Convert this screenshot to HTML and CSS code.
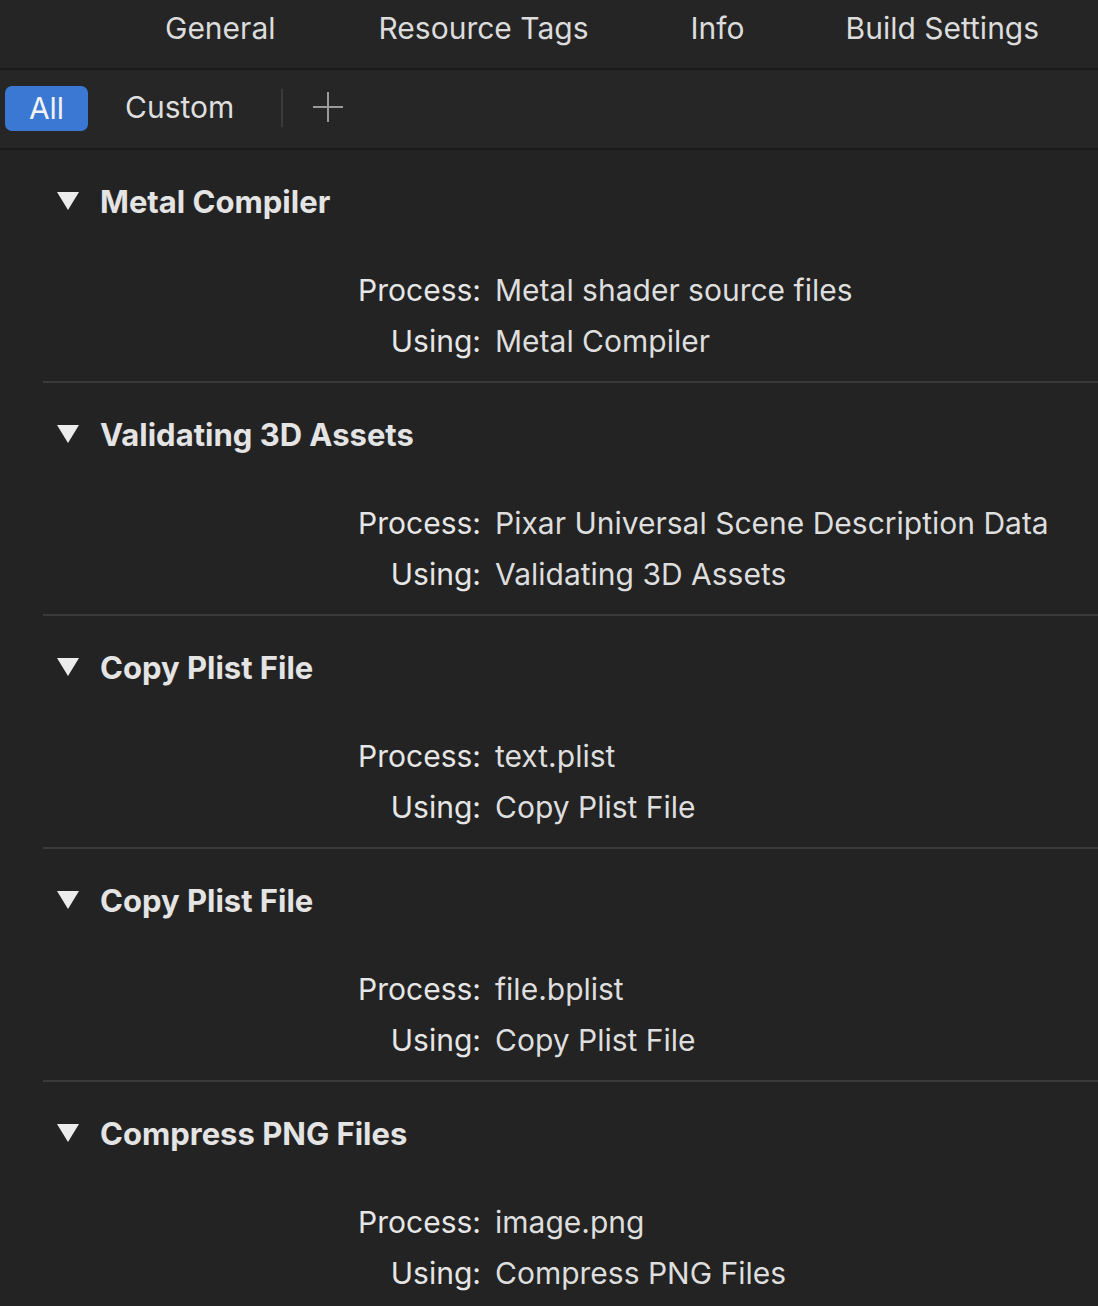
FILE: index.html
```html
<!DOCTYPE html>
<html>
<head>
<meta charset="utf-8">
<link rel="stylesheet" href="styles.css">
</head>
<body>
<div class="tabs">
  <span class="tab t-general">General</span>
  <span class="tab t-tags">Resource Tags</span>
  <span class="tab t-info">Info</span>
  <span class="tab t-build">Build Settings</span>
</div>
<div class="filter">
  <span class="pill">All</span>
  <span class="custom">Custom</span>
  <span class="divider"></span>
  <svg class="plus" width="32" height="32" viewBox="0 0 32 32"><path d="M16 1V31M1 16H31" stroke="#9a9a9a" stroke-width="2" fill="none"/></svg>
</div>
<div class="list">
  <div class="section">
    <div class="head"><span class="tri"></span><span class="title">Metal Compiler</span></div>
    <div class="row"><span class="label">Process:</span><span class="value">Metal shader source files</span></div>
    <div class="row"><span class="label">Using:</span><span class="value">Metal Compiler</span></div>
  </div>
  <div class="section">
    <div class="head"><span class="tri"></span><span class="title">Validating 3D Assets</span></div>
    <div class="row"><span class="label">Process:</span><span class="value">Pixar Universal Scene Description Data</span></div>
    <div class="row"><span class="label">Using:</span><span class="value">Validating 3D Assets</span></div>
  </div>
  <div class="section">
    <div class="head"><span class="tri"></span><span class="title">Copy Plist File</span></div>
    <div class="row"><span class="label">Process:</span><span class="value">text.plist</span></div>
    <div class="row"><span class="label">Using:</span><span class="value">Copy Plist File</span></div>
  </div>
  <div class="section">
    <div class="head"><span class="tri"></span><span class="title">Copy Plist File</span></div>
    <div class="row"><span class="label">Process:</span><span class="value">file.bplist</span></div>
    <div class="row"><span class="label">Using:</span><span class="value">Copy Plist File</span></div>
  </div>
  <div class="section last">
    <div class="head"><span class="tri"></span><span class="title">Compress PNG Files</span></div>
    <div class="row"><span class="label">Process:</span><span class="value">image.png</span></div>
    <div class="row"><span class="label">Using:</span><span class="value">Compress PNG Files</span></div>
  </div>
</div>
</body>
</html>
```
FILE: styles.css
```css
html, body {
  margin: 0;
  padding: 0;
  background: #232323;
  font-family: "Inter", "Liberation Sans", sans-serif;
  color: #dedede;
  overflow: hidden;
}
.tabs {
  height: 68px;
  background: #252525;
  border-bottom: 2px solid #1b1b1b;
  display: flex;
  align-items: center;
  font-size: 30px;
  color: #dcdcdc;
  padding-left: 165px;
}
.tab { line-height: 40px; margin-top: -12px; }
.t-tags { margin-left: 103px; }
.t-info { margin-left: 102px; }
.t-build { margin-left: 101px; }
.filter {
  height: 78px;
  background: #262626;
  border-bottom: 2px solid #1a1a1a;
  display: flex;
  align-items: center;
  padding-left: 5px;
}
.pill {
  width: 83px;
  height: 45px;
  background: #3a78d4;
  border-radius: 7px;
  color: #f2f2f2;
  font-size: 30px;
  line-height: 45px;
  text-align: center;
  margin-top: -2px;
}
.custom {
  font-size: 30px;
  margin-left: 37px;
  color: #dedede;
  margin-top: -4px;
}
.divider {
  width: 2px;
  height: 38px;
  background: #3a3a3a;
  margin-left: 47px;
  margin-top: -2px;
}
.plus { margin-left: 29px; margin-top: -4px; }
.section {
  margin-left: 43px;
  border-bottom: 2px solid #3a3a3a;
  padding-top: 31px;
  box-sizing: border-box;
  height: 233px;
}
.section.last { border-bottom: none; }
.head {
  display: flex;
  align-items: center;
  height: 40px;
  margin-bottom: 44px;
}
.tri {
  width: 0;
  height: 0;
  border-left: 11px solid transparent;
  border-right: 11px solid transparent;
  border-top: 18px solid #ececec;
  margin-left: 14px;
  margin-top: -1px;
}
.title {
  font-weight: 700;
  font-size: 31px;
  margin-left: 21px;
  color: #e4e4e4;
}
.row {
  display: flex;
  height: 51px;
  line-height: 51px;
  font-size: 30px;
}
.label {
  width: 438px;
  text-align: right;
  color: #e6e6e6;
}
.value {
  margin-left: 14px;
  color: #dedede;
}
```
